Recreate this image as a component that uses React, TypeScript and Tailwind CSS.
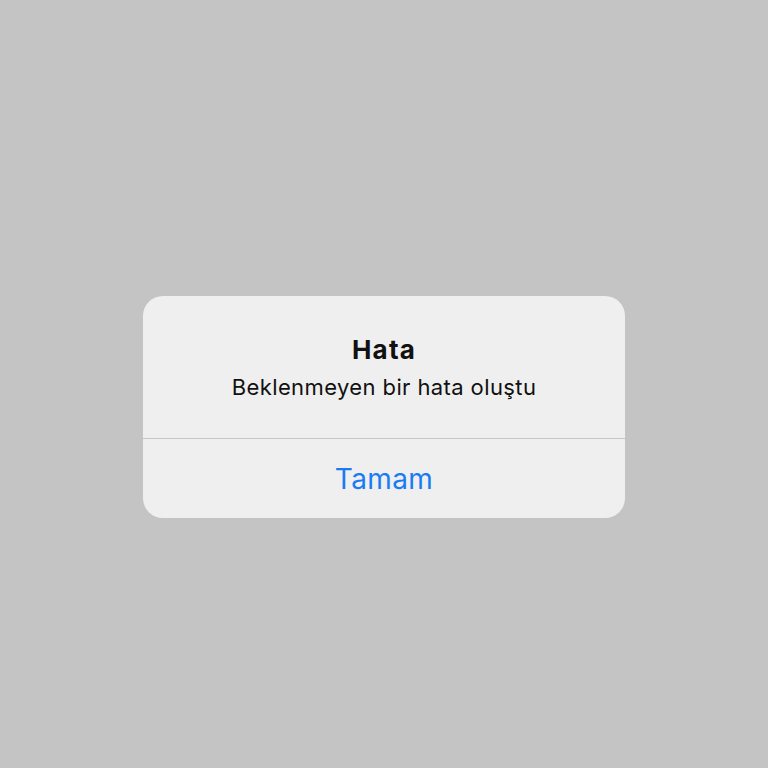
export default function App() {
  return (
    <div
      className="flex h-[768px] w-full items-center justify-center bg-[#c4c4c4]"
      style={{ fontFamily: "Inter, 'Noto Sans', sans-serif" }}
    >
      <div className="mt-[45px] w-[482px] overflow-hidden rounded-[20px] bg-[#efefef]">
        <div className="flex h-[142px] flex-col items-center pt-[38px]">
          <h1 className="text-[26px] font-bold leading-[32px] tracking-[1.2px] text-[#111]">Hata</h1>
          <p className="mt-[7px] text-[22px] leading-[28px] tracking-[0.4px] text-[#111]">
            Beklenmeyen bir hata oluştu
          </p>
        </div>
        <div className="h-px bg-[#c6c6c6]" />
        <button className="flex h-[79px] w-full items-center justify-center pt-[2px] text-[28px] tracking-[0.4px] text-[#1a7cf4]">
          Tamam
        </button>
      </div>
    </div>
  );
}
